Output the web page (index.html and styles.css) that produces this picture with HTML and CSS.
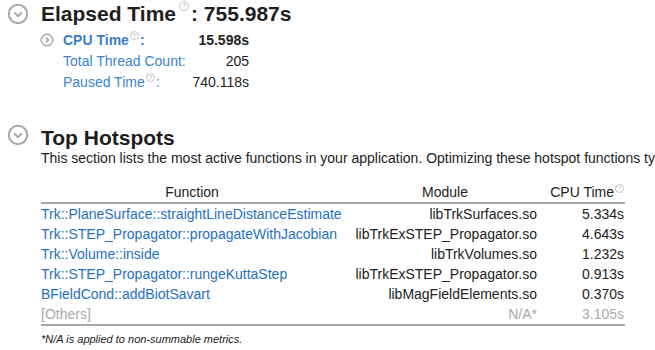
FILE: index.html
```html
<!DOCTYPE html>
<html>
<head>
<meta charset="utf-8">
<link rel="stylesheet" href="styles.css">
</head>
<body>
<div class="page">
  <section class="section s1">
    <div class="sec-head">
      <svg class="toggle" width="22" height="22" viewBox="0 0 22 22"><circle cx="11" cy="11" r="9.2" fill="none" stroke="#a6a6a6" stroke-width="2"/><path d="M7.2 9.4 L11 13.2 L14.8 9.4" fill="none" stroke="#a6a6a6" stroke-width="2"/></svg>
      <h2 class="title">Elapsed Time<span class="help help-lg">?</span>: 755.987s</h2>
    </div>
    <div class="stats">
      <svg class="sub-toggle" width="14" height="14" viewBox="0 0 14 14"><circle cx="7" cy="7" r="5.8" fill="none" stroke="#a6a6a6" stroke-width="1.4"/><path d="M5.9 4.6 L8.3 7 L5.9 9.4" fill="none" stroke="#a6a6a6" stroke-width="1.5"/></svg>
      <span class="label strong">CPU Time<span class="help">?</span>:</span>
      <span class="value strong">15.598s</span>
      <span></span>
      <span class="label">Total Thread Count:</span>
      <span class="value">205</span>
      <span></span>
      <span class="label">Paused Time<span class="help">?</span>:</span>
      <span class="value">740.118s</span>
    </div>
  </section>
  <section class="section s2">
    <div class="sec-head">
      <svg class="toggle" width="22" height="22" viewBox="0 0 22 22"><circle cx="11" cy="11" r="9.2" fill="none" stroke="#a6a6a6" stroke-width="2"/><path d="M7.2 9.4 L11 13.2 L14.8 9.4" fill="none" stroke="#a6a6a6" stroke-width="2"/></svg>
      <h2 class="title">Top Hotspots</h2>
    </div>
    <div class="body">
      <p class="desc">This section lists the most active functions in your application. Optimizing these hotspot functions typically results in improving overall application performance.</p>
      <table class="hot">
        <colgroup><col class="c-fn"><col class="c-mod"><col class="c-cpu"></colgroup>
        <thead>
          <tr><th class="h-fn">Function</th><th class="h-mod">Module</th><th class="h-cpu">CPU Time<span class="help">?</span></th></tr>
        </thead>
        <tbody>
          <tr><td class="fn">Trk::PlaneSurface::straightLineDistanceEstimate</td><td class="mod">libTrkSurfaces.so</td><td class="cpu">5.334s</td></tr>
          <tr><td class="fn">Trk::STEP_Propagator::propagateWithJacobian</td><td class="mod">libTrkExSTEP_Propagator.so</td><td class="cpu">4.643s</td></tr>
          <tr><td class="fn">Trk::Volume::inside</td><td class="mod">libTrkVolumes.so</td><td class="cpu">1.232s</td></tr>
          <tr><td class="fn">Trk::STEP_Propagator::rungeKuttaStep</td><td class="mod">libTrkExSTEP_Propagator.so</td><td class="cpu">0.913s</td></tr>
          <tr><td class="fn">BFieldCond::addBiotSavart</td><td class="mod">libMagFieldElements.so</td><td class="cpu">0.370s</td></tr>
          <tr class="others"><td class="fn">[Others]</td><td class="mod">N/A*</td><td class="cpu">3.105s</td></tr>
        </tbody>
      </table>
      <p class="note">*N/A is applied to non-summable metrics.</p>
    </div>
  </section>
</div>
</body>
</html>
```

FILE: styles.css
```css
html, body {
  margin: 0;
  padding: 0;
  background: #ffffff;
}
body {
  font-family: "Liberation Sans", Arial, sans-serif;
  color: #222222;
  width: 655px;
  height: 350px;
  overflow: hidden;
}
.page {
  padding-left: 7px;
  white-space: nowrap;
}
.section.s1 {
  padding-top: 2px;
}
.section.s2 {
  margin-top: 33px;
}
.sec-head {
  display: flex;
  align-items: flex-start;
  gap: 12px;
}
.toggle {
  display: block;
  margin-top: 1px;
  flex: none;
}
.s2 .toggle {
  margin-top: -2px;
}
.title {
  margin: 0;
  font-size: 21px;
  line-height: 24px;
  font-weight: bold;
  color: #1e1e1e;
}
.help {
  display: inline-block;
  box-sizing: border-box;
  width: 9px;
  height: 9px;
  border: 1px solid #c4c4c4;
  border-radius: 50%;
  font-size: 7px;
  line-height: 7px;
  text-align: center;
  color: #b8b8b8;
  font-weight: normal;
  vertical-align: top;
  margin-top: 1px;
  margin-left: 1px;
  margin-right: 1px;
}
.help-lg {
  width: 10px;
  height: 10px;
  line-height: 8px;
  font-size: 8px;
  margin-top: -1px;
  margin-left: 3px;
  margin-right: 2px;
}
.stats {
  display: grid;
  grid-template-columns: 22px auto 1fr;
  width: 208px;
  margin-left: 34px;
  margin-top: 4px;
  font-size: 14px;
  line-height: 21px;
}
.sub-toggle {
  display: block;
  margin-top: 3px;
  margin-left: -1px;
}
.label {
  color: #3a84cc;
}
.label.strong {
  font-weight: bold;
  color: #3a7fc8;
}
.value {
  text-align: right;
  color: #222222;
}
.value.strong {
  font-weight: bold;
}
.body {
  margin-left: 34px;
}
.desc {
  margin: 0;
  font-size: 14px;
  line-height: 16px;
  color: #222222;
  width: 614px;
  overflow: hidden;
}
.hot {
  margin-top: 17px;
  border-collapse: collapse;
  table-layout: fixed;
  width: 584px;
  font-size: 14px;
}
.c-fn { width: 302px; }
.c-mod { width: 204px; }
.c-cpu { width: 78px; }
.hot th {
  font-weight: normal;
  line-height: 19px;
  padding: 0;
  color: #222222;
  border-bottom: 2px solid #a8a8a8;
}
.h-fn { text-align: center; }
.h-mod { text-align: center; padding-left: 4px; }
.h-cpu { text-align: right; padding-right: 1px; }
.hot td {
  line-height: 20px;
  padding: 0;
}
.hot tbody tr:last-child td {
  border-bottom: 2px solid #a8a8a8;
}
.fn {
  color: #1f70c1;
  text-align: left;
}
.mod {
  text-align: right;
  padding-right: 10px !important;
  color: #222222;
}
.cpu {
  text-align: right;
  padding-right: 1px !important;
  color: #222222;
}
.others td {
  color: #aaaaaa;
}
.note {
  margin: 5px 0 0;
  font-size: 11px;
  line-height: 16px;
  font-style: italic;
  color: #222222;
}
```
